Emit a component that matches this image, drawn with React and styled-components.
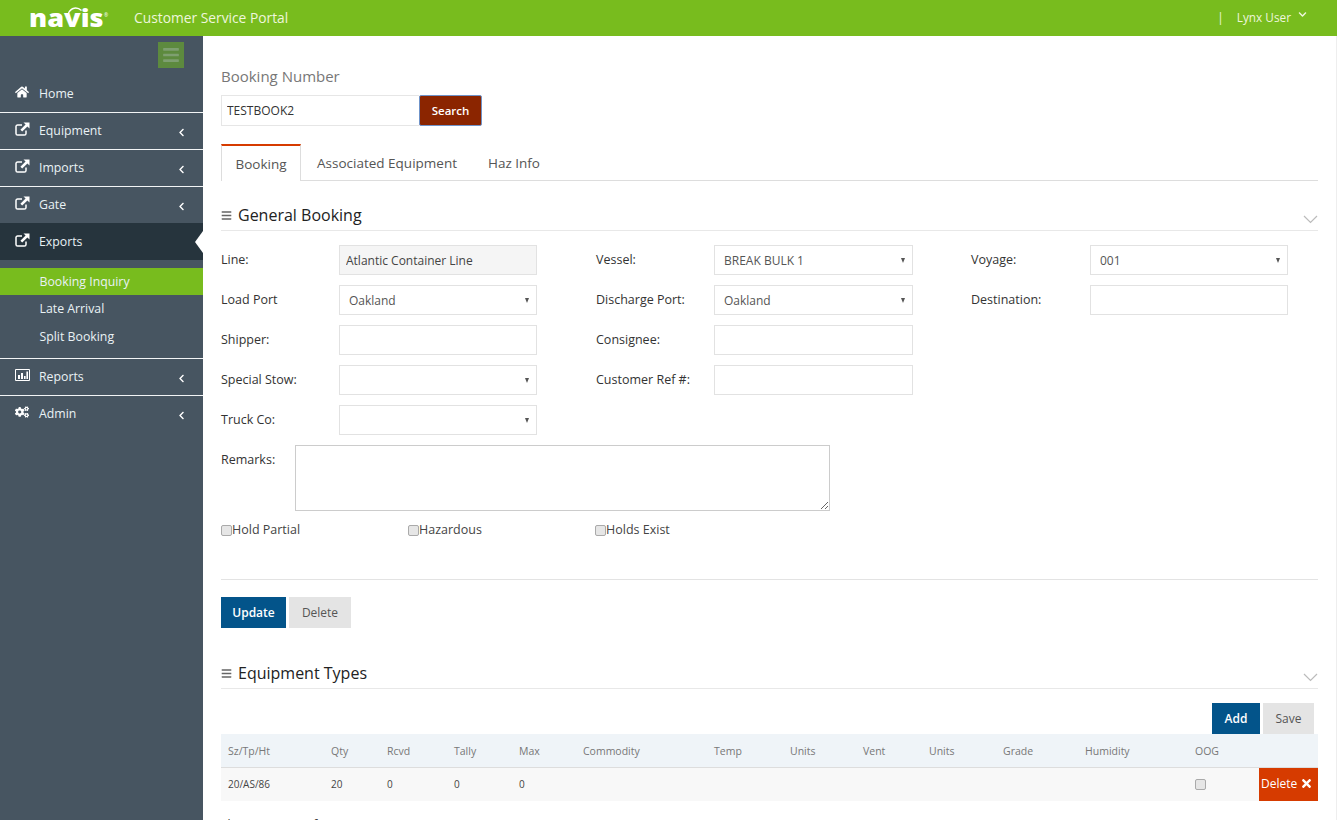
import React from "react";
import styled, { createGlobalStyle } from "styled-components";
import { FaHome, FaChevronLeft, FaChevronDown, FaCogs, FaTimes, FaBars } from "react-icons/fa";

const Global = createGlobalStyle`
  html, body { margin: 0; padding: 0; height: 100%; overflow: hidden; background: #fff; }
  body { font-family: "Open Sans", "Liberation Sans", sans-serif; font-size: 13px; color: #333; }
  * { box-sizing: border-box; }
`;

const Page = styled.div`display: flex; flex-direction: column; height: 820px; width: 1337px; overflow: hidden;`;
const Header = styled.header`height: 36px; flex: none; background: #78bc1e; display: flex; align-items: center; color: #eef6dc;`;
const LogoBox = styled.div`width: 134px; padding-left: 29px; position: relative; display: flex; align-items: center; height: 36px;`;
const LogoText = styled.span`font-family: "Open Sans", sans-serif; font-weight: 800; font-size: 24px; line-height: 36px; color: #fff; margin-top: -1px; transform: scaleX(1.13); transform-origin: left;`;
const LogoArc = styled.svg`position: absolute; left: 67px; top: 6px;`;
const LogoMark = styled.span`position: absolute; left: 104px; top: 11px; font-size: 5px; line-height: 8px; color: #fff;`;
const Title = styled.div`font-size: 13.8px; flex: 1; margin-top: -1px;`;
const UserBox = styled.div`display: flex; align-items: center; font-size: 11.8px; padding-right: 30px; margin-top: -2px;`;
const Pipe = styled.span`margin-right: 13px;`;
const Caret = styled(FaChevronDown)`font-size: 9px; margin-left: 7px; margin-top: -5px;`;

const Body = styled.div`flex: 1; display: flex; min-height: 0;`;
const Side = styled.aside`width: 203px; flex: none; background: #475561; color: #eaf2f5; display: flex; flex-direction: column;`;
const ToggleRow = styled.div`height: 39px; padding: 6px 19px 0 0; display: flex; justify-content: flex-end;`;
const Toggle = styled.div`width: 26px; height: 26px; background: #5d8a3e; color: #7e9f70; display: flex; align-items: center; justify-content: center; font-size: 18px;`;
const NavItem = styled.div`
  height: ${p => p.$h || 37}px; display: flex; align-items: center; position: relative;
  padding-left: 15px; padding-right: 17px; font-size: 12.3px;
  background: ${p => (p.$active ? "#26343d" : "transparent")};
  border-bottom: ${p => (p.$line ? "1px solid #f2f4f5" : "none")};
`;
const NavIcon = styled.span`width: 24px; display: flex; align-items: center; margin-top: -4px; color: #fff; font-size: 14px;`;
const NavLabel = styled.span`flex: 1; margin-top: -1px;`;
const NavCaret = styled(FaChevronLeft)`font-size: 9px; color: #fff; margin-top: 3px;`;
const Notch = styled.span`position: absolute; right: 0; top: 8px; border-style: solid; border-width: 11px 8px 11px 0; border-color: transparent #fff transparent transparent;`;
const SubMenu = styled.div`padding: 8px 0 7px; border-bottom: 1px solid #f2f4f5;`;
const SubItem = styled.div`
  height: ${p => p.$h}px; display: flex; align-items: center; padding-left: 39.5px; font-size: 12.3px;
  background: ${p => (p.$active ? "#78bc1e" : "transparent")};
`;

const Main = styled.main`flex: 1; padding: 29px 18px 0; border-right: 1px solid #eee; overflow: hidden; min-width: 0;`;
const SearchLabel = styled.div`font-size: 15px; color: #777; line-height: 22px; margin-bottom: 8px;`;
const SearchRow = styled.div`display: flex; height: 31px;`;
const SearchInput = styled.input`width: 198px; height: 31px; border: 1px solid #e6e6e6; border-right: none; padding: 0 5px; font: 12px "Open Sans", sans-serif; color: #333; outline: none;`;
const SearchBtn = styled.button`width: 63px; height: 31px; background: #8b2500; color: #fff; border: 1px solid #6f93c9; border-radius: 2px; font: 600 11.5px "Open Sans", sans-serif; padding: 0;`;
const Tabs = styled.div`display: flex; margin-top: 18px; height: 37px; border-bottom: 1px solid #ddd;`;
const Tab = styled.div`
  height: 37px; font-size: 13.5px; color: #555; display: flex; align-items: center; justify-content: center;
  width: ${p => p.$w}px; padding-top: 1px;
  ${p => p.$active && `border-top: 2px solid #d63b00; border-left: 1px solid #ddd; border-right: 1px solid #ddd; background: #fff; height: 37px; color: #555;`}
`;
const SectionHead = styled.div`display: flex; align-items: center; height: 32px; border-bottom: 1px solid #e8e8e8; margin-top: ${p => p.$mt}px; position: relative;`;
const SectionIcon = styled(FaBars)`font-size: 11px; color: #666; margin-right: 6px; margin-top: 2px;`;
const SectionTitle = styled.h2`margin: 0; font-size: 16px; font-weight: 400; color: #222; line-height: 22px; margin-top: 1px;`;
const SectionChevron = styled.svg`position: absolute; right: 0; top: 16px;`;

const FormGrid = styled.div`
  display: grid; margin-top: 14px; row-gap: 10px;
  grid-template-columns: 118px 198px 59px 118px 199px 58px 119px 198px;
  grid-auto-rows: 30px;
`;
const Label = styled.label`grid-column: ${p => p.$col}; display: flex; align-items: center; font-size: 12.5px; color: #333; margin-top: -2px;`;
const Field = styled.div`grid-column: ${p => p.$col}; position: relative; height: 30px;`;
const TextInput = styled.input`width: 100%; height: 30px; border: 1px solid #e2e2e2; padding: 0 6px; font: 12px "Open Sans", sans-serif; color: #444; outline: none; background: ${p => (p.readOnly ? "#f5f5f5" : "#fff")};`;
const Select = styled.select`width: 100%; height: 30px; border: 1px solid #e2e2e2; padding: 0 9px; font: 12px "Open Sans", sans-serif; color: #555; background: #fff; appearance: none; outline: none; border-radius: 0;`;
const SelectArrow = styled.span`position: absolute; right: 8px; top: 13px; width: 0; height: 0; border-style: solid; border-width: 5px 2.5px 0; border-color: #555 transparent transparent; pointer-events: none;`;
const RemarksRow = styled.div`display: flex; margin-top: 10px; height: 66px;`;
const RemarksLabel = styled.label`width: 74px; font-size: 12.5px; color: #333; padding-top: 6px;`;
const Remarks = styled.textarea`width: 535px; height: 66px; border: 1px solid #ccc; outline: none; display: block; resize: both;`;
const Checks = styled.div`display: flex; margin-top: 9px; height: 18px; align-items: center;`;
const CheckLabel = styled.label`width: 187px; display: flex; align-items: center; font-size: 12.5px; color: #444;`;
const Check = styled.input.attrs({ type: "checkbox" })`
  appearance: none; width: 11px; height: 11px; margin: 3px 0 0; border: 1px solid #aaa; border-radius: 2px; background: #e6e6e6; flex: none;
`;
const Rule = styled.hr`border: none; border-top: 1px solid #e3e3e3; margin: 41px 0 17px;`;
const Buttons = styled.div`display: flex; gap: ${p => p.$gap || 3}px; justify-content: ${p => p.$end ? "flex-end" : "flex-start"}; padding-right: ${p => p.$end ? 4 : 0}px;`;
const Btn = styled.button`
  width: ${p => p.$w}px; height: 31px; border: none; padding: 0; font: ${p => p.$primary ? 600 : 400} 12px "Open Sans", sans-serif;
  background: ${p => (p.$primary ? "#03548a" : "#e4e4e4")}; color: ${p => (p.$primary ? "#fff" : "#555")};
`;
const TableWrap = styled.div`margin-top: 14px;`;
const Table = styled.table`width: 1097px; table-layout: fixed; border-collapse: collapse; font-size: 10.5px;`;
const Col = styled.col`width: ${p => p.$w}px;`;
const Th = styled.th`height: 33px; background: #eff4f8; color: #777; font-weight: 400; text-align: left; padding: 2px 7px 0; border-bottom: 1px solid #ddd;`;
const Td = styled.td`height: 34px; background: #f8f8f8; color: #444; padding: 0 7px; font-size: 10px;`;
const DeleteCell = styled.td`height: 34px; background: #d63b00; color: #fff; font-size: 12px; padding: 0 0 2px 2px; white-space: nowrap;`;
const DelIcon = styled(FaTimes)`font-size: 13px; vertical-align: -2px; margin-left: 3px;`;
const TableCheck = styled(Check)`margin: 3px 0 0;`;
const Info = styled.div`margin-top: 15px; font-size: 12px; color: #333;`;

const ExternalIcon = () => (
  <svg width="15" height="14" viewBox="0 0 15 14" fill="none">
    <path d="M7 3H2.6A1.6 1.6 0 0 0 1 4.6v6.8A1.6 1.6 0 0 0 2.6 13h6.8a1.6 1.6 0 0 0 1.6-1.6V8.5" stroke="#fff" strokeWidth="1.5" />
    <path d="M8.5 .5H14.5V6.5L12.4 4.4L7.2 9.6L5.4 7.8L10.6 2.6Z" fill="#fff" />
  </svg>
);
const ChartIcon = () => (
  <svg width="15" height="12" viewBox="0 0 15 12">
    <path d="M.5 .5h14v11H.5z" fill="none" stroke="#fff" strokeWidth="1" />
    <path d="M3 6h2v4H3zM6 4h2v6H6zM9 7h1.6v3H9zM11.4 2.5H13V10h-1.6z" fill="#fff" />
  </svg>
);

const nav1 = ["Equipment", "Imports", "Gate"];
const cols = [103, 56, 67, 65, 64, 131, 76, 73, 66, 74, 82, 110, 71, 59];
const heads = ["Sz/Tp/Ht", "Qty", "Rcvd", "Tally", "Max", "Commodity", "Temp", "Units", "Vent", "Units", "Grade", "Humidity", "OOG", ""];

const Sel = ({ col, value }) => (
  <Field $col={col}>
    <Select defaultValue={value}><option>{value}</option></Select>
    <SelectArrow />
  </Field>
);
const Inp = ({ col, value, readOnly }) => (
  <Field $col={col}><TextInput defaultValue={value} readOnly={readOnly} /></Field>
);

export default function App() {
  return (
    <Page>
      <Global />
      <Header>
        <LogoBox>
          <LogoText>navis</LogoText>
          <LogoArc width="18" height="8" viewBox="0 0 18 8" fill="none"><path d="M1.5 7C4 1.5 10 .5 14.5 4.5" stroke="#fff" strokeWidth="1.4" /></LogoArc>
          <LogoMark>®</LogoMark>
        </LogoBox>
        <Title>Customer Service Portal</Title>
        <UserBox><Pipe>|</Pipe>Lynx User<Caret /></UserBox>
      </Header>
      <Body>
        <Side>
          <ToggleRow><Toggle><FaBars /></Toggle></ToggleRow>
          <NavItem $h={38} $line><NavIcon><FaHome /></NavIcon><NavLabel>Home</NavLabel></NavItem>
          {nav1.map((n, i) => (
            <NavItem key={n} $line={i < 2} $h={i < 2 ? 37 : 36}><NavIcon><ExternalIcon /></NavIcon><NavLabel>{n}</NavLabel><NavCaret /></NavItem>
          ))}
          <NavItem $active><NavIcon><ExternalIcon /></NavIcon><NavLabel>Exports</NavLabel><Notch /></NavItem>
          <SubMenu>
            <SubItem $h={27} $active>Booking Inquiry</SubItem>
            <SubItem $h={27}>Late Arrival</SubItem>
            <SubItem $h={29}>Split Booking</SubItem>
          </SubMenu>
          <NavItem $line><NavIcon><ChartIcon /></NavIcon><NavLabel>Reports</NavLabel><NavCaret /></NavItem>
          <NavItem $h={36}><NavIcon><FaCogs /></NavIcon><NavLabel>Admin</NavLabel><NavCaret /></NavItem>
        </Side>
        <Main>
          <SearchLabel>Booking Number</SearchLabel>
          <SearchRow>
            <SearchInput defaultValue="TESTBOOK2" />
            <SearchBtn>Search</SearchBtn>
          </SearchRow>
          <Tabs>
            <Tab $active $w={80}>Booking</Tab>
            <Tab $w={172}>Associated Equipment</Tab>
            <Tab $w={82}>Haz Info</Tab>
          </Tabs>
          <SectionHead $mt={18}>
            <SectionIcon /><SectionTitle>General Booking</SectionTitle>
            <SectionChevron width="15" height="9" viewBox="0 0 15 9" fill="none"><path d="M1 1l6.5 6.5L14 1" stroke="#bbb" strokeWidth="1.2" /></SectionChevron>
          </SectionHead>
          <FormGrid>
            <Label $col={1}>Line:</Label><Inp col={2} value="Atlantic Container Line" readOnly />
            <Label $col={4}>Vessel:</Label><Sel col={5} value="BREAK BULK 1" />
            <Label $col={7}>Voyage:</Label><Sel col={8} value="001" />
            <Label $col={1}>Load Port</Label><Sel col={2} value="Oakland" />
            <Label $col={4}>Discharge Port:</Label><Sel col={5} value="Oakland" />
            <Label $col={7}>Destination:</Label><Inp col={8} />
            <Label $col={1}>Shipper:</Label><Inp col={2} />
            <Label $col={4}>Consignee:</Label><Inp col={5} />
            <Label $col={1}>Special Stow:</Label><Sel col={2} value="" />
            <Label $col={4}>Customer Ref #:</Label><Inp col={5} />
            <Label $col={1}>Truck Co:</Label><Sel col={2} value="" />
          </FormGrid>
          <RemarksRow>
            <RemarksLabel>Remarks:</RemarksLabel>
            <Remarks />
          </RemarksRow>
          <Checks>
            <CheckLabel><Check />Hold Partial</CheckLabel>
            <CheckLabel><Check />Hazardous</CheckLabel>
            <CheckLabel><Check />Holds Exist</CheckLabel>
          </Checks>
          <Rule />
          <Buttons>
            <Btn $primary $w={65}>Update</Btn>
            <Btn $w={62}>Delete</Btn>
          </Buttons>
          <SectionHead $mt={29}>
            <SectionIcon /><SectionTitle>Equipment Types</SectionTitle>
            <SectionChevron width="15" height="9" viewBox="0 0 15 9" fill="none"><path d="M1 1l6.5 6.5L14 1" stroke="#bbb" strokeWidth="1.2" /></SectionChevron>
          </SectionHead>
          <TableWrap>
            <Buttons $end>
              <Btn $primary $w={48}>Add</Btn>
              <Btn $w={51}>Save</Btn>
            </Buttons>
            <Table>
              <colgroup>{cols.map((w, i) => <Col key={i} $w={w} />)}</colgroup>
              <thead><tr>{heads.map((h, i) => <Th key={i}>{h}</Th>)}</tr></thead>
              <tbody>
                <tr>
                  <Td>20/AS/86</Td><Td>20</Td><Td>0</Td><Td>0</Td><Td>0</Td>
                  <Td /><Td /><Td /><Td /><Td /><Td /><Td />
                  <Td><TableCheck /></Td>
                  <DeleteCell>Delete<DelIcon /></DeleteCell>
                </tr>
              </tbody>
            </Table>
            <Info>Showing 1 to 1 of 1 entries</Info>
          </TableWrap>
        </Main>
      </Body>
    </Page>
  );
}
